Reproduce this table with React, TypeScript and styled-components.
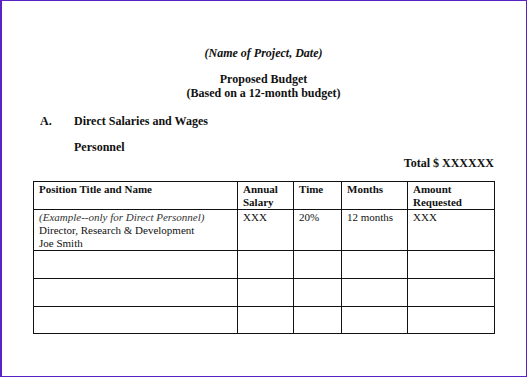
import React from "react";
import styled, { createGlobalStyle } from "styled-components";

const Global = createGlobalStyle`
  html, body { margin: 0; padding: 0; background: #ffffff; }
  * { box-sizing: border-box; }
`;

const Page = styled.div`
  width: 527px;
  height: 377px;
  border: 1px solid #5a22c4;
  border-left-width: 2px;
  background: #ffffff;
  font-family: "Liberation Serif", "Times New Roman", serif;
  color: #111111;
  padding: 45px 32px 0 31px;
  display: flex;
  flex-direction: column;
`;

const Centered = styled.div<{ $italic?: boolean; $mt?: number }>`
  text-align: center;
  font-weight: bold;
  font-size: 12px;
  line-height: 14px;
  font-style: ${(p) => (p.$italic ? "italic" : "normal")};
  margin-top: ${(p) => p.$mt ?? 0}px;
`;

const SectionRow = styled.div<{ $mt: number }>`
  display: flex;
  font-weight: bold;
  font-size: 12px;
  line-height: 14px;
  margin-top: ${(p) => p.$mt}px;
  padding-left: 7px;
`;

const Letter = styled.span`
  width: 34px;
`;

const Total = styled.div`
  text-align: right;
  font-weight: bold;
  font-size: 12px;
  line-height: 14px;
  margin-top: 2px;
`;

const Table = styled.table`
  margin-top: 11px;
  border-collapse: collapse;
  width: 462px;
  table-layout: fixed;
  font-size: 11px;
  line-height: 13px;
`;

const Th = styled.th<{ $w: number }>`
  width: ${(p) => p.$w}px;
  border: 1px solid #111111;
  text-align: left;
  vertical-align: top;
  font-weight: bold;
  padding: 1px 5px 0 5px;
  height: 28px;
`;

const Td = styled.td<{ $h: number }>`
  border: 1px solid #111111;
  vertical-align: top;
  padding: 1px 5px 0 5px;
  height: ${(p) => p.$h}px;
  font-weight: normal;
`;

const Example = styled.span`
  font-style: italic;
  color: #333333;
  display: block;
`;

const Line = styled.span`
  display: block;
`;

const columns = [
  { label: "Position Title and Name", w: 204 },
  { label: "Annual Salary", w: 56 },
  { label: "Time", w: 48 },
  { label: "Months", w: 66 },
  { label: "Amount Requested", w: 87 },
];

export default function App() {
  return (
    <>
      <Global />
      <Page>
        <Centered $italic>(Name of Project, Date)</Centered>
        <Centered $mt={12}>Proposed Budget</Centered>
        <Centered>(Based on a 12-month budget)</Centered>
        <SectionRow $mt={14}>
          <Letter>A.</Letter>
          <span>Direct Salaries and Wages</span>
        </SectionRow>
        <SectionRow $mt={12}>
          <Letter />
          <span>Personnel</span>
        </SectionRow>
        <Total>Total $ XXXXXX</Total>
        <Table>
          <thead>
            <tr>
              {columns.map((c) => (
                <Th key={c.label} $w={c.w}>
                  {c.label}
                </Th>
              ))}
            </tr>
          </thead>
          <tbody>
            <tr>
              <Td $h={41}>
                <Example>(Example--only for Direct Personnel)</Example>
                <Line>Director, Research &amp; Development</Line>
                <Line>Joe Smith</Line>
              </Td>
              <Td $h={41}>XXX</Td>
              <Td $h={41}>20%</Td>
              <Td $h={41}>12 months</Td>
              <Td $h={41}>XXX</Td>
            </tr>
            {[28, 28, 27].map((h, i) => (
              <tr key={i}>
                {columns.map((c) => (
                  <Td key={c.label} $h={h} />
                ))}
              </tr>
            ))}
          </tbody>
        </Table>
      </Page>
    </>
  );
}
